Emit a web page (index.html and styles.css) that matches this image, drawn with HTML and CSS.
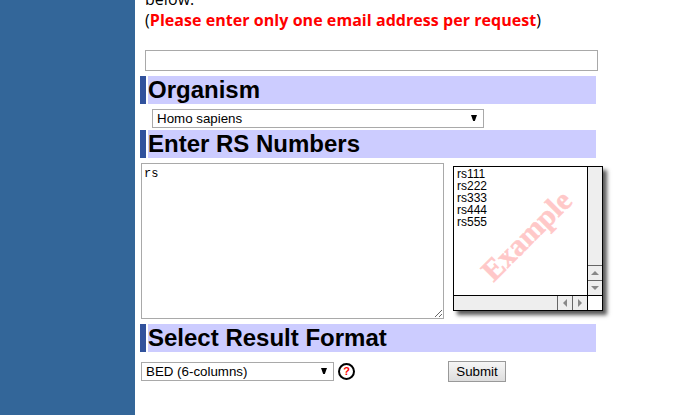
FILE: index.html
```html
<!DOCTYPE html>
<html lang="en">
<head>
<meta charset="utf-8">
<title>RS Number Batch Query</title>
<link rel="stylesheet" href="styles.css">
</head>
<body>
<div class="page">
  <aside class="sidebar"></aside>
  <main class="content">
    <p class="intro">below.<br><span class="note">(<b>Please enter only one email address per request</b>)</span></p>
    <input class="email" type="text" aria-label="Email">
    <h2 class="heading">Organism</h2>
    <div class="row organism-row">
      <div class="select organism">
        <select aria-label="Organism"><option>Homo sapiens</option></select>
        <svg class="arrow" width="6" height="6" viewBox="0 0 6 6"><path d="M0 0H6L3.8 6H2.2Z"/></svg>
      </div>
    </div>
    <h2 class="heading">Enter RS Numbers</h2>
    <div class="row entry">
      <textarea class="numbers" aria-label="RS numbers">rs</textarea>
      <div class="example">
        <div class="sample">rs111<br>rs222<br>rs333<br>rs444<br>rs555<span class="stamp">Example</span></div>
        <div class="vbar">
          <span class="step"><svg width="8" height="4" viewBox="0 0 8 4"><path d="M0 4L4 0L8 4Z"/></svg></span>
          <span class="step"><svg width="8" height="4" viewBox="0 0 8 4"><path d="M0 0L4 4L8 0Z"/></svg></span>
        </div>
        <div class="hbar">
          <span class="step"><svg width="4" height="8" viewBox="0 0 4 8"><path d="M4 0L0 4L4 8Z"/></svg></span>
          <span class="step"><svg width="4" height="8" viewBox="0 0 4 8"><path d="M0 0L4 4L0 8Z"/></svg></span>
        </div>
        <div class="corner"></div>
      </div>
    </div>
    <h2 class="heading">Select Result Format</h2>
    <div class="row format-row">
      <div class="select format">
        <select aria-label="Result format"><option>BED (6-columns)</option></select>
        <svg class="arrow" width="6" height="6" viewBox="0 0 6 6"><path d="M0 0H6L3.8 6H2.2Z"/></svg>
      </div>
      <span class="help">?</span>
      <button class="submit">Submit</button>
    </div>
  </main>
</div>
</body>
</html>
```
FILE: styles.css
```css
* { box-sizing: border-box; }
body {
  margin: 0;
  background: #fff;
  color: #000;
  font-family: "Liberation Sans", Arial, sans-serif;
  overflow: hidden;
}
.page { display: flex; height: 415px; overflow: hidden; }
.sidebar { flex: none; width: 135px; background: #336699; }
.content { flex: 1; padding-left: 5px; }
.intro {
  margin: -11px 0 19px 5px;
  font: 16px/21px "Open Sans", "Noto Sans", sans-serif;
  letter-spacing: 0.05px;
  white-space: nowrap;
}
.note b { color: #f00; }
.email {
  display: block;
  width: 453px;
  height: 21px;
  margin: 0 0 5px 5px;
  border: 1px solid #a9a9a9;
  background: #fff;
}
.heading {
  width: 456px;
  height: 28px;
  margin: 0;
  padding-left: 2px;
  border-left: 6px solid #31529c;
  background: linear-gradient(#fff, #fff) left / 2px 100% no-repeat #ccccff;
  font-size: 24px;
  line-height: 28px;
  font-weight: bold;
}
.row { display: flex; align-items: flex-start; }
.organism-row { height: 26px; padding: 5px 0 0 12px; }
.select { display: grid; align-items: center; height: 19px; }
.select select, .select .arrow { grid-area: 1 / 1; }
.select select {
  appearance: none;
  width: 100%;
  height: 19px;
  padding: 0 4px;
  border: 1px solid #a9a9a9;
  border-radius: 0;
  background: #fff;
  color: #000;
  font: 13.33px "Liberation Sans", Arial, sans-serif;
}
.arrow { justify-self: end; margin: 0 7px 2px 0; }
.organism { width: 332px; }
.entry { height: 166px; padding: 5px 0 0 1px; }
.numbers {
  width: 303px;
  height: 156px;
  margin: 0 9px 0 0;
  padding: 2px;
  border: 1px solid #a9a9a9;
  outline: 0;
  font: 12px/17px "Liberation Mono", monospace;
}
.example {
  display: grid;
  grid-template: 128px 14px / 133px 14px;
  gap: 1px;
  width: 150px;
  height: 145px;
  margin-top: 3px;
  border: 1px solid #000;
  background: #000;
  box-shadow: 4px 4px 4px rgba(0, 0, 0, .65);
}
.sample {
  position: relative;
  padding: 1px 3px;
  background: #fff;
  font-size: 12px;
  line-height: 12px;
}
.stamp {
  position: absolute;
  left: 16px;
  top: 55px;
  width: 112px;
  color: #ffc8c8;
  font: bold 30px/28px "Liberation Serif", "Times New Roman", serif;
  -webkit-text-stroke: 0.5px #ffc8c8;
  text-align: center;
  transform: rotate(-45deg);
}
.vbar, .hbar { display: flex; justify-content: flex-end; background: #eee; }
.vbar { flex-direction: column; }
.step { display: grid; place-items: center; flex: none; width: 15px; height: 14px; border-left: 1px solid #666; }
.vbar .step { width: 14px; height: 15px; border-left: 0; border-top: 1px solid #666; }
.step svg { fill: #888; }
.corner { background: #fff; }
.format-row { padding: 9px 0 0 1px; }
.format { width: 193px; margin-top: 1px; }
.help {
  width: 17px;
  height: 17px;
  margin: 2px 93px 0 4px;
  border: 2px solid #000;
  border-radius: 50%;
  color: #f00;
  font-size: 11px;
  line-height: 13px;
  font-weight: bold;
  text-align: center;
}
.submit {
  width: 58px;
  height: 21px;
  padding: 0;
  border: 1px solid #999;
  border-radius: 0;
  background: linear-gradient(#f6f6f6, #ddd);
  color: #000;
  font: 13.33px "Liberation Sans", Arial, sans-serif;
}
```
